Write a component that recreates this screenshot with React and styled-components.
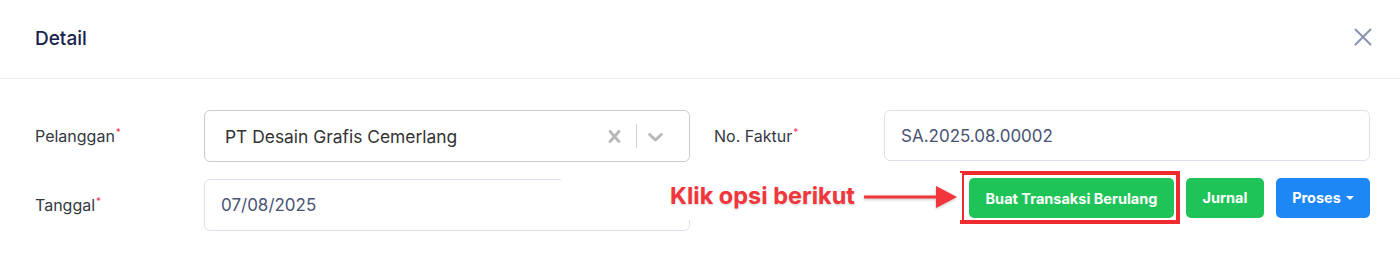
import React from "react";
import styled, { createGlobalStyle } from "styled-components";

const GlobalStyle = createGlobalStyle`
  html, body {
    margin: 0;
    padding: 0;
    background: #ffffff;
  }
  body {
    font-family: "Inter", "Noto Sans", sans-serif;
    -webkit-font-smoothing: antialiased;
  }
`;

// Ventana del modal
const Modal = styled.div`
  width: 1400px;
  height: 256px;
  background: #fff;
  overflow: hidden;
`;

const Header = styled.div`
  height: 79px;
  border-bottom: 1px solid #ebecf0;
  display: flex;
  align-items: center;
  justify-content: space-between;
  padding: 0 27px 0 35px;
  box-sizing: border-box;
`;

const Title = styled.h2`
  margin: 0;
  font-size: 19px;
  font-weight: 500;
  color: #172149;
  margin-top: -2px;
`;

const CloseButton = styled.button`
  border: 0;
  background: none;
  padding: 0;
  width: 20px;
  height: 20px;
  display: flex;
  align-items: center;
  justify-content: center;
  margin-top: -4px;
  cursor: pointer;
`;

const Body = styled.div`
  position: relative;
  padding: 31px 30px 0 35px;
`;

const Grid = styled.div`
  display: grid;
  grid-template-columns: 169px 486px 194px 486px;
  grid-auto-rows: 52px;
  row-gap: 17px;
`;

const Label = styled.label`
  align-self: center;
  padding-left: ${(p) => (p.$indent ? "24px" : "0")};
  font-size: 16px;
  color: #333842;

  sup {
    color: #f0375c;
    font-size: 10px;
    margin-left: 1px;
  }
`;

const Select = styled.div`
  box-sizing: border-box;
  height: 52px;
  border: 1px solid #c9ccd2;
  border-radius: 6px;
  display: flex;
  align-items: center;
  padding: 0 16px 0 20px;
`;

const SelectValue = styled.div`
  flex: 1;
  font-size: 17.4px;
  color: #333;
`;

const Indicator = styled.div`
  width: 36px;
  height: 100%;
  display: flex;
  align-items: center;
  justify-content: center;
  color: #b8b8b8;
`;

const Divider = styled.span`
  width: 1px;
  height: 24px;
  margin-left: 4px;
  background: #d0d0d0;
`;

const Input = styled.div`
  box-sizing: border-box;
  height: ${(p) => p.$h || 52}px;
  border: 1px solid #dde1ec;
  border-radius: 6px;
  display: flex;
  align-items: center;
  padding-left: 16px;
  font-size: 17px;
  color: #4a5373;
`;

const Actions = styled.div`
  align-self: start;
  margin-top: -8px;
  display: flex;
  align-items: center;
  justify-content: flex-end;
`;

const Highlight = styled.div`
  border: 4px solid #f02b2f;
  padding: 3px 2px 2px 5px;
  margin-right: 6px;
  display: flex;
`;

const Button = styled.button`
  width: ${(p) => p.$w}px;
  height: 40px;
  border: 0;
  border-radius: 5px;
  padding: 0;
  margin-left: ${(p) => p.$ml || 0}px;
  background: ${(p) => (p.$variant === "blue" ? "#1e87f6" : "#1ec457")};
  color: #fff;
  font-family: "Inter", sans-serif;
  font-size: 14.5px;
  font-weight: 700;
  display: flex;
  align-items: center;
  justify-content: center;
  gap: 5px;
  cursor: pointer;
`;

const Caret = styled.span`
  width: 0;
  height: 0;
  margin-top: 1px;
  border-left: 4px solid transparent;
  border-right: 4px solid transparent;
  border-top: 4px solid #fff;
`;

// Nota roja encima del formulario
const Callout = styled.div`
  position: absolute;
  left: 561px;
  top: 94px;
  height: 47px;
  padding-left: 109px;
  padding-right: 4px;
  background: #fff;
  display: flex;
  align-items: center;
  gap: 9px;
`;

const CalloutText = styled.span`
  font-size: 23.5px;
  font-weight: 700;
  color: #f2363b;
  text-shadow: 0 1px 2px rgba(0, 0, 0, 0.18);
  margin-top: -2px;
`;

const Arrow = () => (
  <svg width="94" height="26" viewBox="0 0 94 26" style={{ filter: "drop-shadow(0 1px 1.5px rgba(0,0,0,0.25))" }}>
    <rect x="0" y="11.5" width="74" height="3" fill="#f2363b" />
    <polygon points="72,2 93,13 72,24" fill="#f2363b" />
  </svg>
);

const App = () => {
  return (
    <Modal>
      <GlobalStyle />
      <Header>
        <Title>Detail</Title>
        <CloseButton aria-label="close">
          <svg width="18" height="18" viewBox="0 0 18 18">
            <path d="M1.5 1.5 L16.5 16.5 M16.5 1.5 L1.5 16.5" stroke="#8a92ad" strokeWidth="2" strokeLinecap="round" />
          </svg>
        </CloseButton>
      </Header>

      <Body>
        <Grid>
          <Label>
            Pelanggan<sup>*</sup>
          </Label>
          <Select>
            <SelectValue>PT Desain Grafis Cemerlang</SelectValue>
            <Indicator>
              <svg width="25" height="25" viewBox="0 0 20 20" fill="currentColor">
                <path d="M14.348 14.849c-0.469 0.469-1.229 0.469-1.697 0l-2.651-3.030-2.651 3.029c-0.469 0.469-1.229 0.469-1.697 0-0.469-0.469-0.469-1.229 0-1.697l2.758-3.15-2.759-3.152c-0.469-0.469-0.469-1.228 0-1.697s1.228-0.469 1.697 0l2.652 3.031 2.651-3.031c0.469-0.469 1.228-0.469 1.697 0s0.469 1.229 0 1.697l-2.758 3.152 2.758 3.15c0.469 0.469 0.469 1.229 0 1.698z" />
              </svg>
            </Indicator>
            <Divider />
            <Indicator>
              <svg width="25" height="25" viewBox="0 0 20 20" fill="currentColor">
                <path d="M4.516 7.548c0.436-0.446 1.043-0.481 1.576 0l3.908 3.747 3.908-3.747c0.533-0.481 1.141-0.446 1.574 0 0.436 0.445 0.408 1.197 0 1.615-0.406 0.418-4.695 4.502-4.695 4.502-0.217 0.223-0.502 0.335-0.787 0.335s-0.57-0.112-0.789-0.335c0 0-4.287-4.084-4.695-4.502s-0.436-1.17 0-1.615z" />
              </svg>
            </Indicator>
          </Select>
          <Label $indent>
            No. Faktur<sup>*</sup>
          </Label>
          <Input $h={51}>SA.2025.08.00002</Input>

          <Label>
            Tanggal<sup>*</sup>
          </Label>
          <Input>07/08/2025</Input>
          <div />
          <Actions>
            <Highlight>
              <Button $w={205}>Buat Transaksi Berulang</Button>
            </Highlight>
            <Button $w={78}>Jurnal</Button>
            <Button $variant="blue" $w={94} $ml={12}>
              Proses
              <Caret />
            </Button>
          </Actions>
        </Grid>

        <Callout>
          <CalloutText>Klik opsi berikut</CalloutText>
          <Arrow />
        </Callout>
      </Body>
    </Modal>
  );
};

export default App;
